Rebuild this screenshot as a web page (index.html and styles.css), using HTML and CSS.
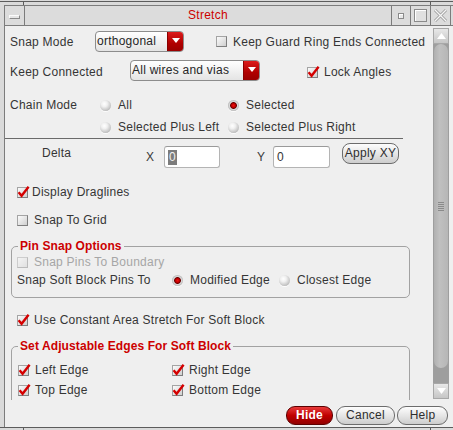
FILE: index.html
```html
<!DOCTYPE html>
<html>
<head>
<meta charset="utf-8">
<title>Stretch</title>
<link rel="stylesheet" href="styles.css">
</head>
<body>
<div class="edge edge-top"><i class="tick-l"></i><i class="tick-r"></i></div>
<div class="window">
  <div class="titlebar">
    <div class="tb menu"><span class="bar"></span></div>
    <div class="title">Stretch</div>
    <div class="tb min"><span class="sq-s"></span></div>
    <div class="tb max"><span class="sq-l"></span></div>
    <div class="tb close">
      <svg width="15" height="15" viewBox="0 0 15 15"><path d="M2 2L13 13M13 2L2 13" stroke="#9c9c9c" stroke-width="3" fill="none"/><path d="M2 2L13 13M13 2L2 13" stroke="#f6f6f6" stroke-width="1.3" fill="none"/></svg>
    </div>
  </div>
  <div class="main">
    <div class="scrollarea">
      <div class="content">
        <div class="upper">
          <div class="row r1">
            <span class="lbl w90">Snap Mode</span>
            <div class="combo w-ortho"><span class="ctext">orthogonal</span><span class="carrow"><svg width="8" height="5" viewBox="0 0 8 5"><path d="M0 0H8L4 5Z" fill="#fff"/></svg></span></div>
            <label class="check ml32"><span class="cb"></span>Keep Guard Ring Ends Connected</label>
          </div>
          <div class="row r2">
            <span class="lbl w125 low">Keep Connected</span>
            <div class="combo w-wires"><span class="ctext">All wires and vias</span><span class="carrow"><svg width="8" height="5" viewBox="0 0 8 5"><path d="M0 0H8L4 5Z" fill="#fff"/></svg></span></div>
            <label class="check ml47 low"><span class="cb"><svg width="13" height="13" viewBox="0 0 13 13"><path d="M1.6 7.2L4.6 10.8L11.6 1.8" stroke="#d40000" stroke-width="2.4" fill="none"/></svg></span>Lock Angles</label>
          </div>
          <div class="row r3">
            <span class="lbl w95">Chain Mode</span>
            <label class="radio w128"><span class="rb"></span>All</label>
            <label class="radio"><span class="rb on"></span>Selected</label>
          </div>
          <div class="row r4">
            <span class="w95"></span>
            <label class="radio w128"><span class="rb"></span>Selected Plus Left</label>
            <label class="radio"><span class="rb"></span>Selected Plus Right</label>
          </div>
          <div class="divider"></div>
        </div>

        <div class="delta">
          <span class="delta-lbl">Delta</span>
          <span class="axis">X</span>
          <div class="field fx"><span class="sel">0</span></div>
          <span class="axis axis-y">Y</span>
          <div class="field fy">0</div>
          <button class="btn btn-apply">Apply XY</button>
        </div>

        <label class="crow drag"><span class="cb"><svg width="13" height="13" viewBox="0 0 13 13"><path d="M1.6 7.2L4.6 10.8L11.6 1.8" stroke="#d40000" stroke-width="2.4" fill="none"/></svg></span>Display Draglines</label>
        <label class="crow grid-row"><span class="cb"></span>Snap To Grid</label>

        <fieldset class="group pin">
          <legend>Pin Snap Options</legend>
          <label class="grow disabled"><span class="cb dis"></span>Snap Pins To Boundary</label>
          <div class="grow soft">
            <span class="w155">Snap Soft Block Pins To</span>
            <label class="radio w107"><span class="rb on"></span>Modified Edge</label>
            <label class="radio"><span class="rb"></span>Closest Edge</label>
          </div>
        </fieldset>

        <label class="crow area"><span class="cb"><svg width="13" height="13" viewBox="0 0 13 13"><path d="M1.6 7.2L4.6 10.8L11.6 1.8" stroke="#d40000" stroke-width="2.4" fill="none"/></svg></span>Use Constant Area Stretch For Soft Block</label>

        <fieldset class="group edges">
          <legend>Set Adjustable Edges For Soft Block</legend>
          <div class="egrid">
            <label class="check"><span class="cb"><svg width="13" height="13" viewBox="0 0 13 13"><path d="M1.6 7.2L4.6 10.8L11.6 1.8" stroke="#d40000" stroke-width="2.4" fill="none"/></svg></span>Left Edge</label>
            <label class="check"><span class="cb"><svg width="13" height="13" viewBox="0 0 13 13"><path d="M1.6 7.2L4.6 10.8L11.6 1.8" stroke="#d40000" stroke-width="2.4" fill="none"/></svg></span>Right Edge</label>
            <label class="check"><span class="cb"><svg width="13" height="13" viewBox="0 0 13 13"><path d="M1.6 7.2L4.6 10.8L11.6 1.8" stroke="#d40000" stroke-width="2.4" fill="none"/></svg></span>Top Edge</label>
            <label class="check"><span class="cb"><svg width="13" height="13" viewBox="0 0 13 13"><path d="M1.6 7.2L4.6 10.8L11.6 1.8" stroke="#d40000" stroke-width="2.4" fill="none"/></svg></span>Bottom Edge</label>
          </div>
        </fieldset>
      </div>
      <div class="scrollbar">
        <div class="sb-arrow"><svg width="9" height="6" viewBox="0 0 9 6"><path d="M0 6H9L4.5 0Z" fill="#fff"/></svg></div>
        <div class="sb-thumb"><span class="grip"></span></div>
        <div class="sb-gap"></div>
        <div class="sb-arrow"><svg width="9" height="6" viewBox="0 0 9 6"><path d="M0 0H9L4.5 6Z" fill="#fff"/></svg></div>
      </div>
    </div>
    <div class="footer">
      <button class="btn btn-hide">Hide</button>
      <button class="btn btn-cancel">Cancel</button>
      <button class="btn btn-help">Help</button>
    </div>
  </div>
</div>
<div class="edge edge-bot"><i class="tick-l"></i><i class="tick-r"></i></div>
</body>
</html>
```
FILE: styles.css
```css
* { box-sizing: border-box; }
html, body { margin: 0; padding: 0; }
body {
  width: 453px; height: 430px; overflow: hidden;
  background: #dadada;
  font-family: "Liberation Sans", Arial, sans-serif;
  font-size: 12px; letter-spacing: 0.25px; color: #353535;
}
.edge { display: flex; justify-content: space-between; }
.edge i { display: block; }
.edge-top { margin-top: 1px; height: 4px; border-top: 1px solid #5c5c5c; }
.edge-bot { height: 3px; border-top: 1px solid #5c5c5c; }
.tick-l { width: 24px; border-right: 1px solid #5c5c5c; }
.tick-r { width: 23px; border-left: 1px solid #5c5c5c; }

.window {
  margin-left: 4px; height: 422px;
  border-left: 1px solid #7c7c7c;
  display: flex; flex-direction: column;
}
.titlebar {
  display: flex; flex: none; height: 21px;
  background: #dcdcdc;
  border-top: 1px solid #7c7c7c; border-bottom: 1px solid #7c7c7c;
  padding-right: 2px;
}
.tb { display: flex; align-items: center; justify-content: center; border-right: 1px solid #7c7c7c; }
.menu { width: 20px; }
.min { width: 19px; }
.max { width: 20px; }
.close { width: 20px; }
.title { flex: 1; border-right: 1px solid #7c7c7c; text-align: center; color: #cc0000; line-height: 19px; }
.bar { width: 11px; height: 4px; margin-top: 2px; background: #e6e6e6; border: 1px solid #8a8a8a; border-top-color: #fbfbfb; border-left-color: #fbfbfb; }
.sq-s { width: 6px; height: 6px; border: 1px solid #8a8a8a; background: #e8e8e8; box-shadow: inset 1px 1px #fff; }
.sq-l { width: 13px; height: 13px; border: 1px solid #8a8a8a; background: #e0e0e0; box-shadow: inset 1px 1px #fff; }

.main { flex: 1; display: flex; flex-direction: column; background: #efefef; }
.scrollarea { height: 374px; flex: none; display: flex; }
.content { flex: 1; overflow: hidden; }

.row { display: flex; align-items: center; }
.upper { padding-top: 5px; }
.r1 { height: 21px; }
.r2 { height: 21px; margin-top: 8px; }
.r3 { height: 20px; margin-top: 14px; }
.r4 { height: 20px; margin-top: 2px; }
.low { margin-top: 3px; }
.lbl { padding-left: 5px; }
.w90 { width: 90px; flex: none; }
.w125 { width: 125px; flex: none; }
.w95 { width: 95px; flex: none; }
.w128 { width: 128px; flex: none; }
.w155 { width: 155px; flex: none; }
.w107 { width: 107px; flex: none; }
.ml32 { margin-left: 32px; }
.ml47 { margin-left: 47px; }

.combo {
  display: flex; height: 21px; flex: none;
  border: 1px solid #8c8c8c; border-radius: 4px; overflow: hidden;
  background: linear-gradient(#ffffff, #e4e4e4);
}
.w-ortho { width: 89px; }
.w-wires { width: 130px; }
.ctext { flex: 1; padding-left: 1px; line-height: 18px; color: #262626; }
.carrow {
  width: 16px; flex: none; display: flex; justify-content: center; align-items: flex-start; padding-top: 6px;
  background: linear-gradient(#dc1c1c, #b00000 60%, #9a0000);
  border-left: 1px solid #8a0000;
}

.check, .radio { display: flex; align-items: center; }
.cb {
  position: relative; flex: none; width: 11px; height: 11px; margin-right: 6px;
  border: 1px solid #a4a4a4; border-right-color: #7e7e7e; border-bottom-color: #7e7e7e;
  background: linear-gradient(135deg, #fbfbfb, #cfcfcf);
}
.cb svg { position: absolute; left: -1px; top: -3px; }
.cb.dis { opacity: 0.45; }
.rb {
  flex: none; width: 11px; height: 11px; margin-right: 7px; border-radius: 50%;
  background: radial-gradient(circle at 40% 35%, #ffffff 0, #f0f0f0 30%, #c2c2c2 70%, #8c8c8c 100%);
  box-shadow: 0 1px 0 rgba(255,255,255,0.8);
}
.rb.on {
  background: radial-gradient(circle at 50% 50%, #ee1010 0, #c80000 1.8px, #6a0000 3px, #dedede 3.8px, #c0c0c0 65%, #8a8a8a 100%);
}

.divider { width: 398px; height: 1px; margin-top: 1px; background: #6a6a6a; }

.delta { display: flex; align-items: flex-start; height: 25px; margin-top: 4px; }
.delta-lbl { width: 141px; padding-left: 37px; line-height: 20px; flex: none; }
.axis { width: 18px; flex: none; line-height: 22px; margin-top: 3px; color: #3a3a3a; }
.axis-y { margin-left: 37px; width: 16px; }
.field {
  flex: none; height: 22px; margin-top: 3px; padding-left: 3px; line-height: 20px;
  background: #fff; border: 1px solid #b4b4b4; border-top-color: #9a9a9a; border-radius: 3px;
}
.fx { width: 56px; }
.fy { width: 57px; }
.sel { display: inline-block; background: #7c7c7c; color: #f2f2f2; line-height: 15px; padding: 0 1px; }

.btn {
  font-family: inherit; font-size: 12px; letter-spacing: 0.25px; color: #2e2e2e;
  height: 19px; padding: 0; border: 1px solid #6c6c6c; border-radius: 9px;
  background: linear-gradient(#fdfdfd, #e6e6e6 50%, #cdcdcd);
  text-align: center; line-height: 17px;
}
.btn-apply { margin-left: 12px; width: 57px; height: 21px; border-radius: 8px; line-height: 19px; flex: none; }

.crow { display: flex; align-items: center; height: 20px; padding-left: 12px; }
.drag { margin-top: 14px; }
.drag .cb { margin-right: 4px; }
.grid-row { margin-top: 8px; }
.area { margin-top: 12px; }

.group {
  margin: 0 0 0 6px; width: 399px; min-width: 0;
  border: 1px solid #a2a2a2; border-radius: 5px;
  padding: 1px 0 9px 5px;
}
.group legend {
  padding: 0 2px; margin-left: 1px; line-height: 14px;
  color: #cc0000; font-weight: bold; letter-spacing: 0.1px;
}
.pin { margin-top: 9px; }
.edges { margin-top: 9px; padding-top: 9px; }
.grow { display: flex; align-items: center; height: 16px; }
.soft { margin-top: 2px; }
.disabled { color: #a6a6a6; }
.egrid { display: grid; grid-template-columns: 154px auto; row-gap: 4px; padding-left: 1px; }
.egrid .check { height: 16px; }

.scrollbar {
  flex: none; width: 16px; height: 371px; margin: 2px 4px 0 0;
  display: flex; flex-direction: column;
  background: #9e9e9e;
}
.sb-arrow {
  height: 16px; flex: none; display: flex; align-items: center; justify-content: center;
  background: linear-gradient(#e8e8e8, #c6c6c6);
  border: 1px solid #a8a8a8;
}
.sb-thumb {
  height: 324px; flex: none; margin: 0 1px;
  background: linear-gradient(90deg, #b0b0b0, #c0c0c0 40%, #b6b6b6);
  border-radius: 7px;
  display: flex; align-items: center; justify-content: center;
}
.grip { width: 6px; height: 9px; background: repeating-linear-gradient(#8a8a8a 0 1px, transparent 1px 2px); }
.sb-gap { flex: 1; }

.footer { flex: 1; display: flex; justify-content: flex-end; align-items: flex-start; padding: 6px 5px 0 0; }
.btn-hide {
  width: 47px; color: #fff; font-weight: bold; border-color: #5c0000;
  background: linear-gradient(#e83a3a, #c00000 50%, #920000);
}
.btn-cancel { width: 59px; margin-left: 3px; }
.btn-help { width: 51px; margin-left: 2px; }
```
